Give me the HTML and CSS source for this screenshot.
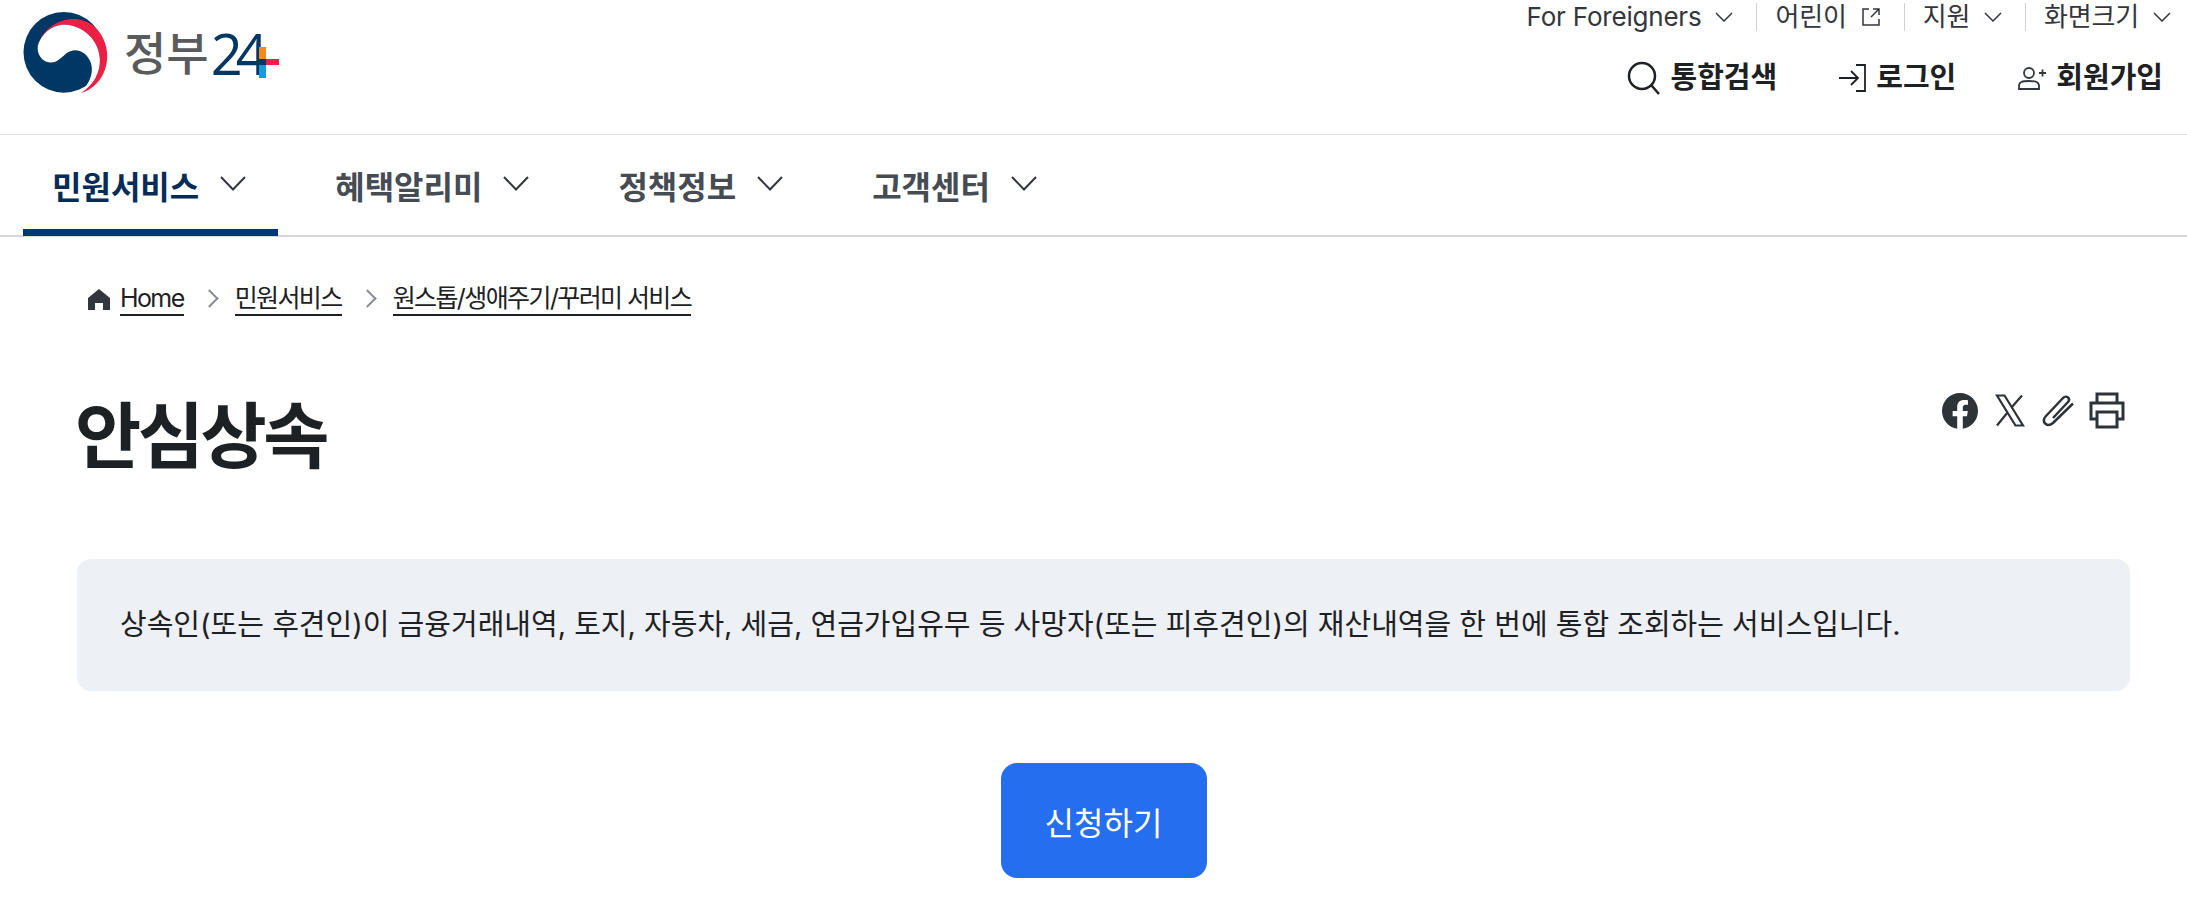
FILE: index.html
```html
<!DOCTYPE html>
<html lang="ko">

<head>
    <meta charset="UTF-8">
    <meta name="viewport" content="width=device-width, initial-scale=1.0">
    <title>안심상속 | 정부24</title>
    <link rel="stylesheet" href="styles.css">
</head>

<body>
    <header class="header">
        <a class="logo" href="#">
            <svg class="logo-mark" viewBox="68 34 254 246">
                <circle cx="190" cy="155" r="121" fill="#003764" />
                <path fill="#ed1f45" d="M112 135C125 85 175 52 225 55C290 60 322 120 320 170C318 225 285 265 240 278C280 250 300 215 298 175C296 120 250 75 195 72C155 70 122 100 112 135Z" />
                <path fill="#fff" d="M112 135C122 100 155 70 195 72C250 75 296 120 298 175C300 215 280 250 240 278C265 250 280 220 272 190C262 155 225 135 195 160C175 178 165 188 145 185C125 182 108 160 112 135Z" />
            </svg>
            <span class="logo-name">정부</span>
            <span class="logo-num">24</span>
            <svg class="logo-plus" viewBox="0 0 20 31">
                <rect x="0" y="0" width="7" height="13" fill="#f28a1e" />
                <rect x="0" y="18" width="7" height="13" fill="#1a9ad6" />
                <rect x="7" y="12" width="13" height="6" fill="#ed1f45" />
                <rect x="0" y="12" width="7" height="6" fill="#003764" />
            </svg>
        </a>
        <div class="util">
            <ul class="util-top">
                <li><a href="#">For Foreigners</a>
                    <svg class="chev-sm" viewBox="0 0 18 10"><path d="M1 1l8 8 8-8" /></svg>
                </li>
                <li><a href="#">어린이</a>
                    <svg class="ext-icon" viewBox="0 0 20 20"><path d="M8 2H2v16h16v-6M12 2h6v6M18 2l-8 8" /></svg>
                </li>
                <li><a href="#">지원</a>
                    <svg class="chev-sm" viewBox="0 0 18 10"><path d="M1 1l8 8 8-8" /></svg>
                </li>
                <li><a href="#">화면크기</a>
                    <svg class="chev-sm" viewBox="0 0 18 10"><path d="M1 1l8 8 8-8" /></svg>
                </li>
            </ul>
            <div class="util-main">
                <a href="#">
                    <svg class="icon-search" viewBox="0 0 34 34"><circle cx="15" cy="15" r="13" /><path d="M24.500 24.500L32 33" /></svg>
                    통합검색
                </a>
                <a href="#">
                    <svg class="icon-login" viewBox="0 0 29 28"><path d="M18 1h9v26h-9M1 14h19M13 7l7 7-7 7" /></svg>
                    로그인
                </a>
                <a href="#">
                    <svg class="icon-join" viewBox="0 0 30 24"><circle cx="12" cy="7" r="5" /><path d="M2 23v-3c0-4 3-5 10-5s10 1 10 5v3zM22 7h7M25.500 3.500v7" /></svg>
                    회원가입
                </a>
            </div>
        </div>
    </header>

    <nav class="gnb">
        <a class="gnb-item active" href="#">민원서비스
            <svg class="chev" viewBox="0 0 26 15"><path d="M1 1l12 12.500L25 1" /></svg>
        </a>
        <a class="gnb-item" href="#">혜택알리미
            <svg class="chev" viewBox="0 0 26 15"><path d="M1 1l12 12.500L25 1" /></svg>
        </a>
        <a class="gnb-item" href="#">정책정보
            <svg class="chev" viewBox="0 0 26 15"><path d="M1 1l12 12.500L25 1" /></svg>
        </a>
        <a class="gnb-item" href="#">고객센터
            <svg class="chev" viewBox="0 0 26 15"><path d="M1 1l12 12.500L25 1" /></svg>
        </a>
    </nav>

    <main class="content">
        <ol class="crumbs">
            <li>
                <svg class="icon-home" viewBox="0 0 22 21"><path d="M11 0L22 9v12h-7v-7H7v7H0V9z" /></svg>
                <a href="#">Home</a>
            </li>
            <li><a href="#">민원서비스</a></li>
            <li><a href="#">원스톱/생애주기/꾸러미 서비스</a></li>
        </ol>

        <div class="title-row">
            <h1>안심상속</h1>
            <div class="share">
                <svg class="icon-fb" viewBox="0 0 36 36">
                    <path d="M36 18C36 8 28 0 18 0S0 8 0 18c0 9 6.600 16.500 15.200 17.800V23.200h-4.600V18h4.600v-4c0-4.500 2.700-7 6.800-7 2 0 4 .4 4 .4v4.400h-2.300c-2.200 0-2.900 1.400-2.900 2.800V18h5l-.8 5.200h-4.200v12.600C29.400 34.500 36 27 36 18z" />
                </svg>
                <svg class="icon-x" viewBox="0 0 30 33">
                    <path d="M2 1.500h7.500L28 31.500h-7.500zM27 1.500L16.500 13.500M12.500 18.500L2 31.500" />
                </svg>
                <svg class="icon-clip" viewBox="0 0 34 33">
                    <path d="M11 24L26 8c2-2 1-3.500 0-4.500s-3-1.500-5 .5L4 22c-3 3.200-2.500 5.800-.7 7.600s4.400 2.200 7.700-.6L31 9.500" />
                </svg>
                <svg class="icon-print" viewBox="0 0 36 37">
                    <path d="M8 11V2h20v9M8 27H2V11h32v16h-6M8 20h20v15H8z" />
                </svg>
            </div>
        </div>

        <p class="summary">상속인(또는 후견인)이 금융거래내역, 토지, 자동차, 세금, 연금가입유무 등 사망자(또는 피후견인)의 재산내역을 한 번에 통합 조회하는 서비스입니다.</p>

        <div class="actions">
            <a class="apply-btn" href="#">신청하기</a>
        </div>
    </main>

    <footer class="page-end"></footer>
</body>

</html>
```

FILE: styles.css
```css
* {
    box-sizing: border-box;
}

html,
body {
    height: 902px;
    overflow: hidden;
}

body {
    margin: 0;
    background-color: #ffffff;
    color: #1e2124;
    font-family: Inter, "Noto Sans CJK KR", sans-serif;
}

a {
    color: inherit;
    text-decoration: none;
}

ul,
ol {
    list-style: none;
    margin: 0;
    padding: 0;
}

svg {
    display: block;
    flex: none;
}

/* header */
.header {
    display: flex;
    justify-content: space-between;
    height: 135px;
    padding: 0 16px 0 23px;
    border-bottom: 1px solid #dfe1e6;
}

.logo {
    display: flex;
    align-items: flex-start;
    padding-top: 12px;
}

.logo-mark {
    width: 85px;
    height: 82px;
}

.logo-name {
    margin: 18px 0 0 16px;
    font-size: 46px;
    line-height: 46px;
    font-weight: 500;
    color: #5a5b5d;
}

.logo-num {
    margin: 13px 0 0 2px;
    font-family: "Open Sans", sans-serif;
    font-size: 56px;
    line-height: 56px;
    letter-spacing: -7px;
    color: #003764;
}

.logo-plus {
    width: 20px;
    height: 31px;
    margin: 35px 0 0 -2px;
}

.util {
    display: flex;
    flex-direction: column;
    align-items: flex-end;
}

.util-top {
    display: flex;
    height: 31px;
    padding-top: 3px;
    font-size: 26px;
    line-height: 28px;
    letter-spacing: -0.2px;
    color: #33363d;
}

.util-top li {
    display: flex;
    align-items: center;
    gap: 14px;
    padding: 0 0 0 18px;
    margin-left: 23px;
    border-left: 1px solid #cdd1d5;
}

.util-top li:first-child {
    border-left: none;
}

.chev-sm {
    width: 18px;
    height: 10px;
    fill: none;
    stroke: #33363d;
    stroke-width: 1.500;
}

.ext-icon {
    width: 20px;
    height: 20px;
    fill: none;
    stroke: #33363d;
    stroke-width: 1.500;
}

.util-main {
    display: flex;
    gap: 61px;
    margin-top: 28px;
    padding-right: 8px;
    font-size: 29px;
    line-height: 38px;
    font-weight: 700;
    color: #1e2124;
}

.util-main a {
    display: flex;
    align-items: center;
    gap: 9px;
}

.icon-search {
    width: 34px;
    height: 34px;
    fill: none;
    stroke: #1e2124;
    stroke-width: 2.500;
}

.icon-login {
    width: 29px;
    height: 28px;
    fill: none;
    stroke: #1e2124;
    stroke-width: 1.800;
}

.icon-join {
    width: 30px;
    height: 24px;
    fill: none;
    stroke: #33363d;
    stroke-width: 1.800;
}

/* main menu */
.gnb {
    display: flex;
    gap: 28px;
    height: 102px;
    padding-left: 23px;
    border-bottom: 2px solid #d6d8dd;
}

.gnb-item {
    display: flex;
    align-items: center;
    gap: 21px;
    height: 101px;
    padding: 0 32px 2px 29px;
    font-size: 32px;
    font-weight: 700;
    color: #464c53;
}

.gnb-item.active {
    color: #052b57;
    border-bottom: 7px solid #003675;
    padding-top: 5px;
    padding-bottom: 0;
}

.chev {
    width: 26px;
    height: 15px;
    margin-top: -3px;
    fill: none;
    stroke: #33363d;
    stroke-width: 2;
}

/* content */
.content {
    padding: 0 57px 0 77px;
}

.crumbs {
    display: flex;
    align-items: center;
    gap: 51px;
    margin-top: 45px;
    padding-left: 11px;
    font-size: 25px;
    line-height: 32px;
    letter-spacing: -1.6px;
    color: #1e2124;
}

.crumbs li {
    position: relative;
    display: flex;
    align-items: center;
    gap: 10px;
}

.crumbs li + li::before {
    content: "";
    position: absolute;
    left: -32px;
    top: 10px;
    width: 11px;
    height: 11px;
    border-top: 2px solid #8a8d93;
    border-right: 2px solid #8a8d93;
    transform: rotate(45deg);
}

.crumbs a {
    border-bottom: 2px solid #1e2124;
}

.icon-home {
    width: 22px;
    height: 21px;
    fill: #33363d;
}

.title-row {
    display: flex;
    justify-content: space-between;
    align-items: flex-start;
    margin-top: 74px;
}

h1 {
    margin: 0 0 0 -2px;
    font-size: 72px;
    line-height: 92px;
    letter-spacing: -3.500px;
    font-weight: 700;
    color: #1e2124;
}

.share {
    display: flex;
    align-items: center;
    gap: 17px;
    margin: 2px 5px 0 0;
}

.icon-fb {
    width: 36px;
    height: 36px;
    fill: #2e3338;
}

.icon-x {
    width: 30px;
    height: 33px;
    fill: none;
    stroke: #2e3338;
    stroke-width: 2.200;
}

.icon-clip {
    width: 34px;
    height: 33px;
    fill: none;
    stroke: #2e3338;
    stroke-width: 2.500;
}

.icon-print {
    width: 36px;
    height: 37px;
    margin-left: -4px;
    fill: none;
    stroke: #2e3338;
    stroke-width: 3;
}

.summary {
    display: flex;
    align-items: center;
    height: 132px;
    margin: 77px 0 0;
    padding: 0 43px;
    background-color: #edf0f5;
    border-radius: 14px;
    font-size: 29px;
    line-height: 40px;
    color: #1e2124;
}

.actions {
    display: flex;
    justify-content: center;
    margin-top: 72px;
}

.apply-btn {
    display: flex;
    align-items: center;
    justify-content: center;
    width: 206px;
    height: 115px;
    background-color: #256ef0;
    border-radius: 16px;
    font-size: 32px;
    color: #ffffff;
}

.page-end {
    margin-top: 25px;
    border-top: 1px solid #eeeeee;
}
```
